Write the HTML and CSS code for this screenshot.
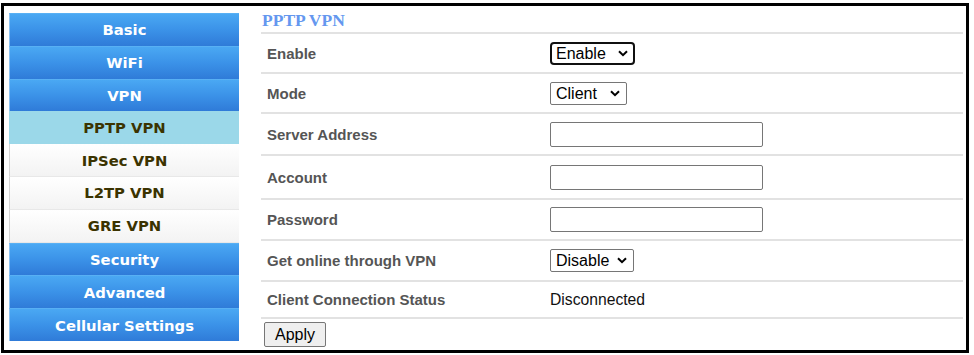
FILE: index.html
```html
<!DOCTYPE html>
<html>
<head>
<meta charset="utf-8">
<link rel="stylesheet" href="styles.css">
</head>
<body>
<div class="frame">
  <nav class="menu">
    <div class="item main">Basic</div>
    <div class="item main">WiFi</div>
    <div class="item main">VPN</div>
    <div class="item sub active">PPTP VPN</div>
    <div class="item sub">IPSec VPN</div>
    <div class="item sub">L2TP VPN</div>
    <div class="item sub">GRE VPN</div>
    <div class="item main">Security</div>
    <div class="item main">Advanced</div>
    <div class="item main">Cellular Settings</div>
  </nav>
  <main class="content">
    <div class="row head"><h1 class="title">PPTP VPN</h1></div>
    <div class="row h40">
      <div class="label">Enable</div>
      <div class="ctrl">
        <span class="selwrap">
          <select class="sel focused w85"><option>Enable</option><option>Disable</option></select>
          <svg class="chev" width="10" height="7" viewBox="0 0 10 7"><path d="M1 1.2 L5 5.2 L9 1.2" fill="none" stroke="#000" stroke-width="2"/></svg>
        </span>
      </div>
    </div>
    <div class="row h40">
      <div class="label">Mode</div>
      <div class="ctrl">
        <span class="selwrap">
          <select class="sel w77"><option>Client</option><option>Server</option></select>
          <svg class="chev" width="10" height="7" viewBox="0 0 10 7"><path d="M1 1.2 L5 5.2 L9 1.2" fill="none" stroke="#000" stroke-width="2"/></svg>
        </span>
      </div>
    </div>
    <div class="row h42">
      <div class="label">Server Address</div>
      <div class="ctrl"><input class="txt" type="text"></div>
    </div>
    <div class="row h44">
      <div class="label">Account</div>
      <div class="ctrl"><input class="txt" type="text"></div>
    </div>
    <div class="row h41">
      <div class="label">Password</div>
      <div class="ctrl"><input class="txt" type="password"></div>
    </div>
    <div class="row h41">
      <div class="label">Get online through VPN</div>
      <div class="ctrl">
        <span class="selwrap">
          <select class="sel w84"><option>Disable</option><option>Enable</option></select>
          <svg class="chev" width="10" height="7" viewBox="0 0 10 7"><path d="M1 1.2 L5 5.2 L9 1.2" fill="none" stroke="#000" stroke-width="2"/></svg>
        </span>
      </div>
    </div>
    <div class="row h37">
      <div class="label">Client Connection Status</div>
      <div class="ctrl status">Disconnected</div>
    </div>
    <div class="actions"><button class="btn" type="button">Apply</button></div>
  </main>
</div>
</body>
</html>
```

FILE: styles.css
```css
html, body {
  margin: 0;
  padding: 0;
  background: #ffffff;
}

.frame {
  box-sizing: border-box;
  margin: 3px 0 0 1px;
  width: 968px;
  height: 350px;
  border: 3px solid #000;
  padding: 7px 3px 0 5px;
  display: grid;
  grid-template-columns: 230px 1fr;
  column-gap: 22px;
  align-items: start;
}

.menu {
  display: flex;
  flex-direction: column;
}

.item {
  box-sizing: border-box;
  height: 32.8px;
  display: flex;
  align-items: center;
  justify-content: center;
  font-family: "DejaVu Sans", Verdana, sans-serif;
  font-weight: bold;
  font-size: 14.8px;
}

.item.main {
  color: #ffffff;
  background: linear-gradient(#4aa8f3, #3b92e8 50%, #2f7bd8);
  border-left: 1px solid #8cc2f2;
  border-top: 1px solid #58b0f4;
}

.item.sub {
  color: #3b3300;
  background: linear-gradient(#ffffff, #f3f3f3);
  border-left: 1px solid #d4d4d4;
  border-bottom: 1px solid #e8e8e8;
}

.item.sub.active {
  background: #9bd8e9;
  border-left-color: #9bd8e9;
  border-bottom-color: #9bd8e9;
}

.content {
  margin-top: -7px;
  display: flex;
  flex-direction: column;
}

.row {
  box-sizing: border-box;
  display: flex;
  align-items: center;
  border-bottom: 2px solid #e2e2e2;
}

.row.head {
  height: 28px;
  align-items: flex-start;
}

.title {
  margin: 4px 0 0 1px;
  font-family: "Liberation Serif", "Times New Roman", serif;
  font-weight: bold;
  font-size: 17.5px;
  line-height: 20px;
  color: #6497ef;
}

.h40 { height: 40px; }
.h41 { height: 41px; }
.h42 { height: 42px; }
.h44 { height: 44px; }
.h37 { height: 37px; }

.label {
  width: 283px;
  padding-left: 6px;
  font-family: "Liberation Sans", Arial, sans-serif;
  font-weight: bold;
  font-size: 15px;
  color: #555555;
}

.ctrl {
  display: flex;
  align-items: center;
}

.status {
  font-family: "Liberation Sans", Arial, sans-serif;
  font-size: 15.7px;
  color: #111111;
}

.selwrap {
  position: relative;
  display: inline-flex;
}

.sel {
  -webkit-appearance: none;
  appearance: none;
  box-sizing: border-box;
  font-family: "Liberation Sans", Arial, sans-serif;
  font-size: 16px;
  color: #000;
  height: 23px;
  border: 1px solid #767676;
  border-radius: 2px;
  background: #fff;
  padding: 0 0 0 5px;
  margin: 0;
}

.w85 { width: 85px; }
.w84 { width: 84px; }
.w77 { width: 77px; }

.sel.focused {
  border: 2px solid #101010;
  border-radius: 4px;
  padding-left: 4px;
}

.chev {
  position: absolute;
  right: 7px;
  top: 8px;
  pointer-events: none;
}

.txt {
  box-sizing: border-box;
  width: 213px;
  height: 25px;
  border: 1px solid #767676;
  border-radius: 2px;
  padding: 1px 2px;
  font-family: "Liberation Sans", Arial, sans-serif;
  font-size: 14px;
  margin: 0;
}

.actions {
  padding: 3px 0 0 3px;
}

.btn {
  box-sizing: border-box;
  width: 62px;
  height: 25px;
  font-family: "Liberation Sans", Arial, sans-serif;
  font-size: 16px;
  color: #000;
  background: #efefef;
  border: 1px solid #767676;
  border-radius: 2px;
  padding: 0;
}
```
